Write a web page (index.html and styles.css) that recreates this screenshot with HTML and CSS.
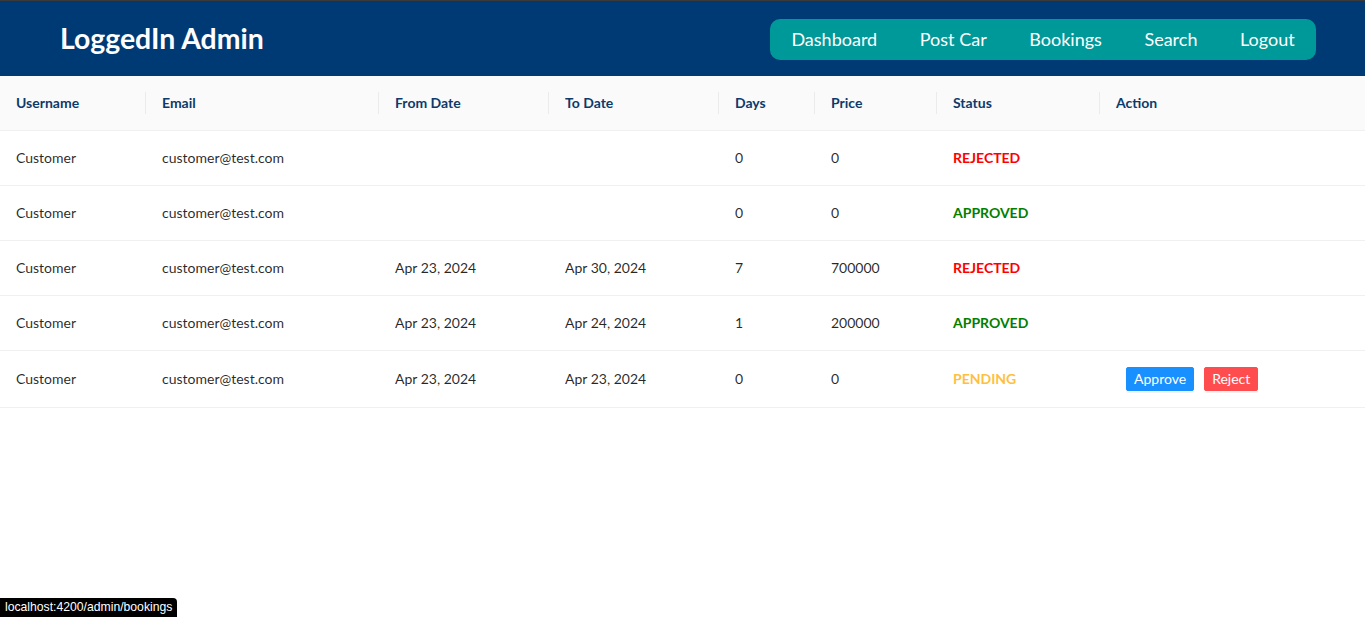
FILE: index.html
```html
<!DOCTYPE html>
<html lang="en">
<head>
<meta charset="utf-8">
<title>Bookings</title>
<link rel="stylesheet" href="styles.css">
</head>
<body>
<header class="topbar">
  <div class="brand">LoggedIn Admin</div>
  <nav class="nav">
    <a class="nav-item" href="#">Dashboard</a>
    <a class="nav-item" href="#">Post Car</a>
    <a class="nav-item" href="#">Bookings</a>
    <a class="nav-item" href="#">Search</a>
    <a class="nav-item" href="#">Logout</a>
  </nav>
</header>
<main>
  <table class="table">
    <colgroup>
      <col class="c-user"><col class="c-email"><col class="c-from"><col class="c-to"><col class="c-days"><col class="c-price"><col class="c-status"><col>
    </colgroup>
    <thead>
      <tr>
        <th>Username</th><th>Email</th><th>From Date</th><th>To Date</th><th>Days</th><th>Price</th><th>Status</th><th class="last">Action</th>
      </tr>
    </thead>
    <tbody>
      <tr><td>Customer</td><td>customer@test.com</td><td></td><td></td><td>0</td><td>0</td><td class="st rejected">REJECTED</td><td></td></tr>
      <tr><td>Customer</td><td>customer@test.com</td><td></td><td></td><td>0</td><td>0</td><td class="st approved">APPROVED</td><td></td></tr>
      <tr><td>Customer</td><td>customer@test.com</td><td>Apr 23, 2024</td><td>Apr 30, 2024</td><td>7</td><td>700000</td><td class="st rejected">REJECTED</td><td></td></tr>
      <tr><td>Customer</td><td>customer@test.com</td><td>Apr 23, 2024</td><td>Apr 24, 2024</td><td>1</td><td>200000</td><td class="st approved">APPROVED</td><td></td></tr>
      <tr><td>Customer</td><td>customer@test.com</td><td>Apr 23, 2024</td><td>Apr 23, 2024</td><td>0</td><td>0</td><td class="st pending">PENDING</td><td class="actions"><button class="btn btn-approve">Approve</button><button class="btn btn-reject">Reject</button></td></tr>
    </tbody>
  </table>
</main>
<div class="statusbar">localhost:4200/admin/bookings</div>
</body>
</html>
```
FILE: styles.css
```css
html, body {
  margin: 0;
  padding: 0;
  background: #ffffff;
  font-family: Lato, "Open Sans", sans-serif;
}

.topbar {
  border-top: 1px solid #3a3a3a;
  background: #003a75;
  display: flex;
  align-items: center;
  justify-content: space-between;
  padding: 0 49px 0 60px;
  box-sizing: border-box;
  height: 76px;
}

.brand {
  color: #ffffff;
  font-weight: 700;
  font-size: 28.4px;
  line-height: 34px;
  margin-top: -1px;
}

.nav {
  display: flex;
  background: #009999;
  border-radius: 10px;
  height: 41px;
  align-items: center;
  margin-top: 1px;
}

.nav-item {
  color: #ffffff;
  text-decoration: none;
  font-size: 18px;
  line-height: 22px;
  padding: 0 21.3px;
}

.table {
  width: 100%;
  border-collapse: collapse;
  table-layout: fixed;
  font-size: 14px;
  color: rgba(0, 0, 0, 0.85);
}

.c-user { width: 146px; }
.c-email { width: 233px; }
.c-from { width: 170px; }
.c-to { width: 170px; }
.c-days { width: 96px; }
.c-price { width: 122px; }
.c-status { width: 163px; }

.table th,
.table td {
  padding: 16px;
  line-height: 22px;
  text-align: left;
  border-bottom: 1px solid #f0f0f0;
  white-space: nowrap;
}

.table th {
  position: relative;
  background: #fafafa;
  color: #0d3a6b;
  font-weight: 700;
  font-size: 14px;
}

.table th::before {
  content: "";
  position: absolute;
  right: 0;
  top: 50%;
  width: 1px;
  height: 22px;
  transform: translateY(-50%);
  background: rgba(0, 0, 0, 0.06);
}

.table th.last::before {
  display: none;
}

.st {
  font-weight: 700;
}

.rejected { color: #ff0000; }
.approved { color: #008000; }
.pending { color: #ffbf3f; }

.btn {
  font-family: Lato, "Open Sans", sans-serif;
  font-size: 14px;
  height: 24px;
  line-height: 22px;
  padding: 0 7px;
  border: 1px solid transparent;
  border-radius: 2px;
  color: #ffffff;
  margin-left: 10px;
  cursor: pointer;
  vertical-align: middle;
  box-shadow: 0 2px 0 rgba(0, 0, 0, 0.045);
}

.btn-approve {
  background: #1890ff;
  border-color: #1890ff;
}

.btn-reject {
  background: #ff4d4f;
  border-color: #ff4d4f;
}

.statusbar {
  position: fixed;
  left: 0;
  bottom: 0;
  height: 19px;
  line-height: 19px;
  padding: 0 5px;
  background: #000000;
  color: #ffffff;
  font-family: "Liberation Sans", Arial, sans-serif;
  font-size: 12.2px;
  border-top-right-radius: 4px;
}
```
